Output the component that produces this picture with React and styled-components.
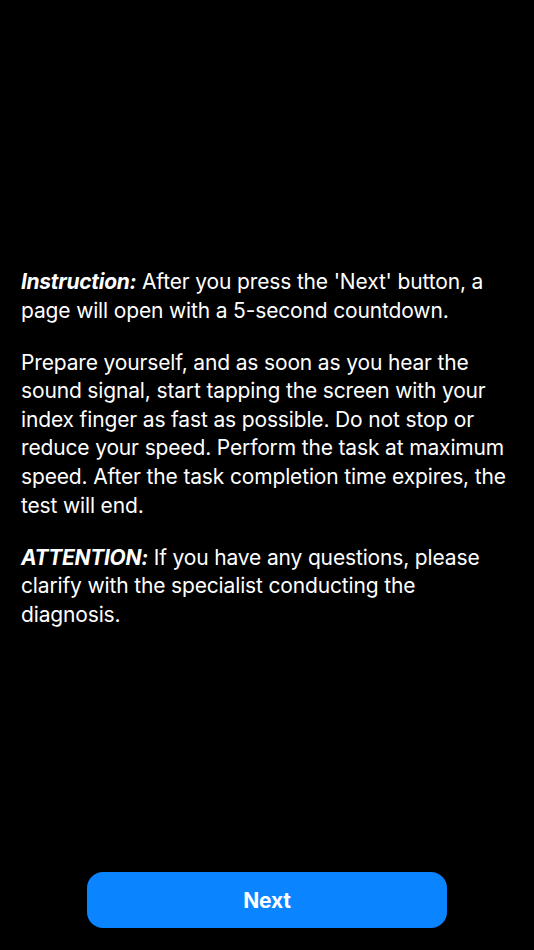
import styled, { createGlobalStyle } from 'styled-components'

const GlobalStyle = createGlobalStyle`
  html, body, #root {
    margin: 0;
    padding: 0;
    height: 100%;
    background: #000;
  }
  body {
    font-family: Inter, "Noto Sans", "Liberation Sans", sans-serif;
    -webkit-font-smoothing: antialiased;
  }
`

const Screen = styled.div`
  height: 100vh;
  display: flex;
  flex-direction: column;
  background: #000;
  color: #fff;
  box-sizing: border-box;
  padding: 0 0 22px;
`

const Content = styled.main`
  flex: 1;
  padding: 268px 21px 0;
`

const Paragraph = styled.p`
  margin: 0 0 23.5px;
  font-size: 21px;
  line-height: 28.6px;
  font-weight: 400;
  letter-spacing: -0.15px;
`

const Lead = styled.em`
  font-weight: 700;
  font-style: italic;
  letter-spacing: -0.3px;
`

const Footer = styled.div`
  display: flex;
  justify-content: center;
`

const Button = styled.button`
  width: 360px;
  height: 56px;
  border: none;
  border-radius: 16px;
  background: #0a84ff;
  color: #fff;
  font-family: inherit;
  font-size: 21px;
  font-weight: 700;
  letter-spacing: -0.2px;
  cursor: pointer;
`

const App = () => {
  return (
    <Screen>
      <GlobalStyle />
      <Content>
        <Paragraph>
          <Lead>Instruction:</Lead> After you press the 'Next' button, a page
          will open with a 5-second countdown.
        </Paragraph>
        <Paragraph>
          Prepare yourself, and as soon as you hear the sound signal, start
          tapping the screen with your index finger as fast as possible. Do not
          stop or reduce your speed. Perform the task at maximum speed. After
          the task completion time expires, the test will end.
        </Paragraph>
        <Paragraph>
          <Lead>ATTENTION:</Lead> If you have any questions, please clarify with
          the specialist conducting the diagnosis.
        </Paragraph>
      </Content>
      <Footer>
        <Button type="button">Next</Button>
      </Footer>
    </Screen>
  )
}

export default App
